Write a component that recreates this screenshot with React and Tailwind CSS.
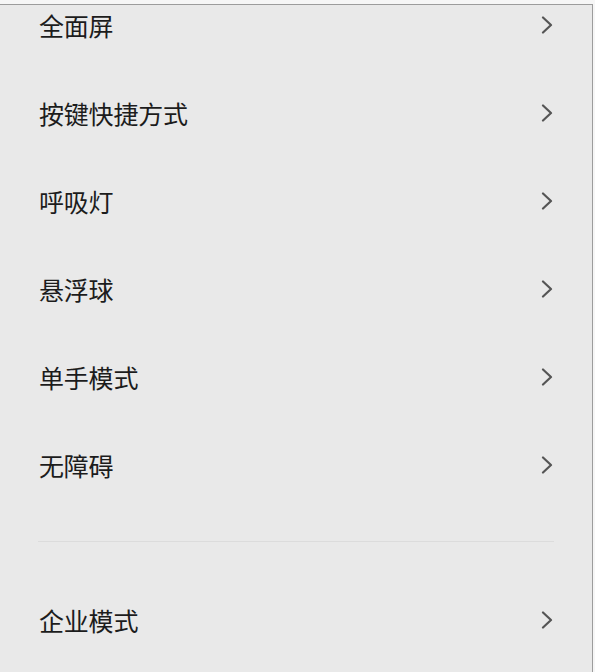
import React from 'react';

const groupA = ['全面屏', '按键快捷方式', '呼吸灯', '悬浮球', '单手模式', '无障碍'];
const groupB = ['企业模式'];

function Chevron() {
  return (
    <svg width="12" height="18" viewBox="0 0 12 18" fill="none" className="shrink-0">
      <path d="M2 1.5 L10 9 L2 16.5" stroke="#555555" strokeWidth="2.2" strokeLinecap="round" strokeLinejoin="round" />
    </svg>
  );
}

function Row({ label }) {
  return (
    <div className="h-[88px] flex items-center justify-between pl-[39px] pr-[39px]">
      <span className="text-[25px] leading-none text-[#1c1c1c] tracking-[-0.2px]">{label}</span>
      <Chevron />
    </div>
  );
}

export default function App() {
  return (
    <div
      className="w-[595px] h-[672px] bg-[#f6f6f6] pt-[4px] overflow-hidden"
      style={{ fontFamily: '"Noto Sans CJK SC", "Noto Sans", sans-serif' }}
    >
      <div className="w-[593px] h-full bg-[#e9e9e9] border-t border-r border-[#9c9c9c] overflow-hidden">
        <div className="-mt-[24px]">
          {groupA.map((item) => (
            <Row key={item} label={item} />
          ))}
        </div>
        <div className="h-[32px]" />
        <div className="mx-[38px] h-px bg-[#dcdcdc]" />
        <div className="h-[34px]" />
        {groupB.map((item) => (
          <Row key={item} label={item} />
        ))}
      </div>
    </div>
  );
}
